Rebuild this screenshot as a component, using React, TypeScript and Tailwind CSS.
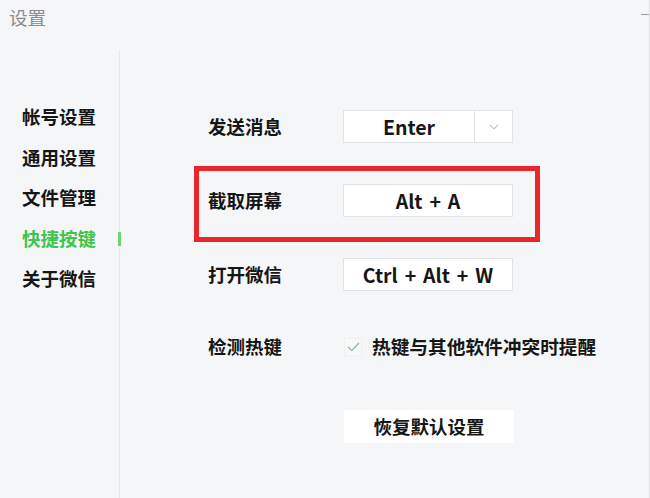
const menu = ["帐号设置", "通用设置", "文件管理", "快捷按键", "关于微信"];

function KeyBox({ label, dropdown }: { label: string; dropdown?: boolean }) {
  return (
    <div className="flex h-[33px] w-[170px] items-stretch border border-[#e2e3e5] bg-white">
      <div className="flex flex-1 items-center justify-center text-[19.5px] font-bold text-[#161616] [word-spacing:2.5px]">
        {label}
      </div>
      {dropdown && (
        <div className="flex w-[38px] items-center justify-center border-l border-[#e2e3e5]">
          <svg width="10" height="6" viewBox="0 0 10 6" fill="none">
            <path d="M1 1l4 4 4-4" stroke="#c4c6c8" strokeWidth="1.2" />
          </svg>
        </div>
      )}
    </div>
  );
}

export default function App() {
  return (
    <div
      className="relative h-[498px] w-[650px] overflow-hidden border-r border-[#dfe0e2] bg-[#f5f6f8] text-[#161616]"
      style={{ fontFamily: '"Noto Sans CJK SC", "Noto Sans", sans-serif' }}
    >
      {/* window title + minimize */}
      <div className="flex h-[50px] items-start justify-between pl-[9px] pt-[4px]">
        <span className="text-[18.5px] text-[#8a8b8d]">设置</span>
        <span className="mr-0 mt-[10px] h-[1px] w-[8px] bg-[#9a9b9d]" />
      </div>

      <div className="flex h-[448px]">
        {/* sidebar */}
        <aside className="relative w-[120px] border-r border-[#e6e7e9] pl-[22px] pt-[47px]">
          {menu.map((m) => (
            <div
              key={m}
              className={`flex h-[40.5px] items-center text-[18.5px] font-bold ${
                m === "快捷按键" ? "text-[#3dc64b]" : "text-[#161616]"
              }`}
            >
              {m}
            </div>
          ))}
          <span className="absolute right-[-2px] top-[182px] h-[14px] w-[3px] bg-[#6fd37a]" />
        </aside>

        {/* shortcut settings */}
        <main className="relative flex-1 pl-[88px] pt-[60px]">
          <div className="flex h-[33px] items-center">
            <span className="w-[135px] text-[18.5px] font-bold">发送消息</span>
            <KeyBox label="Enter" dropdown />
          </div>

          <div className="mt-[41px] flex h-[33px] items-center">
            <span className="w-[135px] text-[18.5px] font-bold">截取屏幕</span>
            <KeyBox label="Alt + A" />
          </div>

          <div className="mt-[41px] flex h-[33px] items-center">
            <span className="w-[135px] text-[18.5px] font-bold">打开微信</span>
            <KeyBox label="Ctrl + Alt + W" />
          </div>

          <div className="mt-[39px] flex h-[33px] items-center">
            <span className="w-[136px] text-[18.5px] font-bold">检测热键</span>
            <span className="mr-[10px] flex h-[18px] w-[18px] items-center justify-center border border-[#eef0f1] bg-[#f7f8f9]">
              <svg width="13" height="10" viewBox="0 0 14 11" fill="none">
                <path d="M1 5.5l4 4L13 1" stroke="#8fbd97" strokeWidth="1.5" />
              </svg>
            </span>
            <span className="text-[18.7px] font-bold">热键与其他软件冲突时提醒</span>
          </div>

          <button className="ml-[136px] mt-[47px] flex h-[33px] w-[170px] items-center justify-center bg-white text-[18.5px] font-bold">
            恢复默认设置
          </button>

          {/* highlight frame around the screenshot shortcut */}
          <div className="pointer-events-none absolute left-[74px] top-[116px] h-[76px] w-[346px] border-[5px] border-[#e8262c]" />
        </main>
      </div>
    </div>
  );
}
